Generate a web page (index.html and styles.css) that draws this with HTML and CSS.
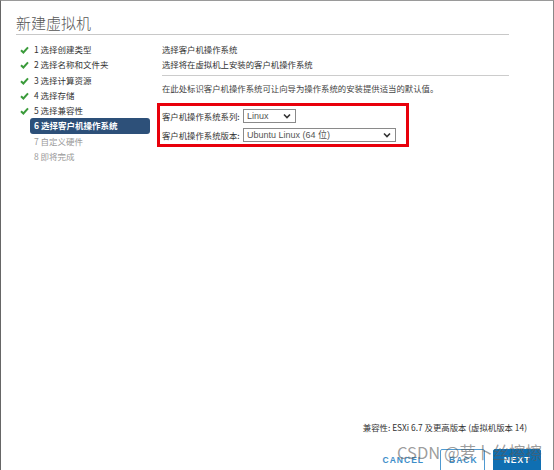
FILE: index.html
```html
<!DOCTYPE html>
<html lang="zh-CN">
<head>
    <meta charset="UTF-8">
    <title>新建虚拟机</title>
    <link rel="stylesheet" href="styles.css">
</head>
<body>
    <div class="dialog">
        <h1 class="title">新建虚拟机</h1>

        <div class="wizard">
            <ul class="steps">
                <li class="done"><svg class="check" width="9" height="8" viewBox="0 0 9 8"><path d="M1 4.2 L3.4 6.5 L8 1.3" fill="none" stroke="#3b9b3b" stroke-width="2"/></svg>1 选择创建类型</li>
                <li class="done"><svg class="check" width="9" height="8" viewBox="0 0 9 8"><path d="M1 4.2 L3.4 6.5 L8 1.3" fill="none" stroke="#3b9b3b" stroke-width="2"/></svg>2 选择名称和文件夹</li>
                <li class="done"><svg class="check" width="9" height="8" viewBox="0 0 9 8"><path d="M1 4.2 L3.4 6.5 L8 1.3" fill="none" stroke="#3b9b3b" stroke-width="2"/></svg>3 选择计算资源</li>
                <li class="done"><svg class="check" width="9" height="8" viewBox="0 0 9 8"><path d="M1 4.2 L3.4 6.5 L8 1.3" fill="none" stroke="#3b9b3b" stroke-width="2"/></svg>4 选择存储</li>
                <li class="done"><svg class="check" width="9" height="8" viewBox="0 0 9 8"><path d="M1 4.2 L3.4 6.5 L8 1.3" fill="none" stroke="#3b9b3b" stroke-width="2"/></svg>5 选择兼容性</li>
                <li class="active">6 选择客户机操作系统</li>
                <li class="todo">7 自定义硬件</li>
                <li class="todo">8 即将完成</li>
            </ul>

            <div class="content">
                <div class="page-head">
                    <div class="page-title">选择客户机操作系统</div>
                    <div class="page-desc">选择将在虚拟机上安装的客户机操作系统</div>
                </div>
                <p class="hint">在此处标识客户机操作系统可让向导为操作系统的安装提供适当的默认值。</p>

                <div class="highlight">
                    <div class="field">
                        <label>客户机操作系统系列:</label>
                        <div class="select small">
                            <span>Linux</span>
                            <svg width="8" height="6" viewBox="0 0 8 6"><path d="M1 1.5 L4 4.5 L7 1.5" fill="none" stroke="#333" stroke-width="1.6"/></svg>
                        </div>
                    </div>
                    <div class="field">
                        <label>客户机操作系统版本:</label>
                        <div class="select wide">
                            <span>Ubuntu Linux (64 位)</span>
                            <svg width="8" height="6" viewBox="0 0 8 6"><path d="M1 1.5 L4 4.5 L7 1.5" fill="none" stroke="#333" stroke-width="1.6"/></svg>
                        </div>
                    </div>
                </div>
            </div>
        </div>

        <div class="compat">兼容性: ESXi 6.7 及更高版本 (虚拟机版本 14)</div>

        <div class="actions">
            <button class="btn btn-link">CANCEL</button>
            <button class="btn btn-outline">BACK</button>
            <button class="btn btn-primary">NEXT</button>
        </div>

        <div class="watermark">CSDN @萝卜丝擦擦</div>
    </div>
</body>
</html>
```

FILE: styles.css
```css
body {
    margin: 0;
    width: 554px;
    height: 470px;
    overflow: hidden;
    background: #fff;
    font-family: "Noto Sans CJK SC", "Noto Sans", sans-serif;
    color: #333;
}
.dialog {
    position: relative;
    height: 469px;
    border-top: 1px solid #9a9a9a;
    border-left: 1px solid #666;
    border-right: 1px solid #888;
    padding: 0 44px 0 15px;
    display: flex;
    flex-direction: column;
}
.title {
    margin: 0;
    padding: 10px 0 0;
    height: 23px;
    font-size: 15px;
    font-weight: 300;
    color: #555;
    line-height: 23px;
    border-bottom: 1px solid #c8c8c8;
}
.wizard {
    display: flex;
    flex: 1;
    padding-top: 7px;
}
.steps {
    list-style: none;
    margin: 0;
    padding: 0;
    width: 135px;
    font-size: 8.5px;
}
.steps li {
    height: 15.3px;
    line-height: 15.3px;
    padding-left: 18px;
    position: relative;
    white-space: nowrap;
}
.steps .check {
    position: absolute;
    left: 4px;
    top: 4px;
}
.steps .active {
    margin-left: 14px;
    padding-left: 4px;
    width: 116px;
    background: #2d5079;
    color: #fff;
    font-weight: bold;
    border-radius: 3px;
}
.steps .todo {
    color: #999;
}
.content {
    flex: 1;
    padding-left: 11px;
    font-size: 8.4px;
}
.page-head {
    padding-bottom: 3px;
    border-bottom: 1px solid #ccc;
}
.page-title {
    line-height: 15px;
}
.page-desc {
    line-height: 15px;
}
.hint {
    margin: 5px 0 0;
    line-height: 14px;
    color: #444;
}
.highlight {
    margin: 8px 0 0 -5px;
    width: 244px;
    height: 38px;
    border: 3px solid #e8000b;
    padding: 0 0 0 2px;
}
.field {
    display: flex;
    align-items: center;
    height: 19px;
}
.field label {
    width: 81px;
    white-space: nowrap;
}
.select {
    height: 12px;
    border: 1px solid #8a8a8a;
    box-sizing: content-box;
    display: flex;
    align-items: center;
    justify-content: space-between;
    padding: 0 4px 0 3px;
    font-family: "Liberation Sans", sans-serif;
    font-size: 9px;
    color: #555;
}
.select.small {
    width: 44px;
}
.select.wide {
    width: 144px;
}
.compat {
    text-align: right;
    margin: 0 -18px 0 0;
    font-size: 8.4px;
    line-height: 12px;
}
.actions {
    display: flex;
    justify-content: flex-end;
    gap: 8px;
    margin: 16px -32px 0 0;
    height: 21px;
}
.btn {
    font-family: "Liberation Sans", sans-serif;
    font-size: 8.5px;
    font-weight: bold;
    letter-spacing: 1px;
    padding: 0 8px 6px;
    height: 28px;
    border-radius: 2px;
    cursor: pointer;
}
.btn-link {
    background: none;
    border: none;
    color: #3e8ec9;
}
.btn-outline {
    background: #fff;
    border: 1px solid #4f9ad1;
    color: #3e8ec9;
    width: 45px;
}
.btn-primary {
    background: #0f6fb2;
    border: 1px solid #0f6fb2;
    color: #fff;
    width: 48px;
}
.watermark {
    position: absolute;
    left: 396px;
    top: 439px;
    font-size: 16.5px;
    color: rgba(90, 90, 90, 0.6);
    white-space: nowrap;
}
```
